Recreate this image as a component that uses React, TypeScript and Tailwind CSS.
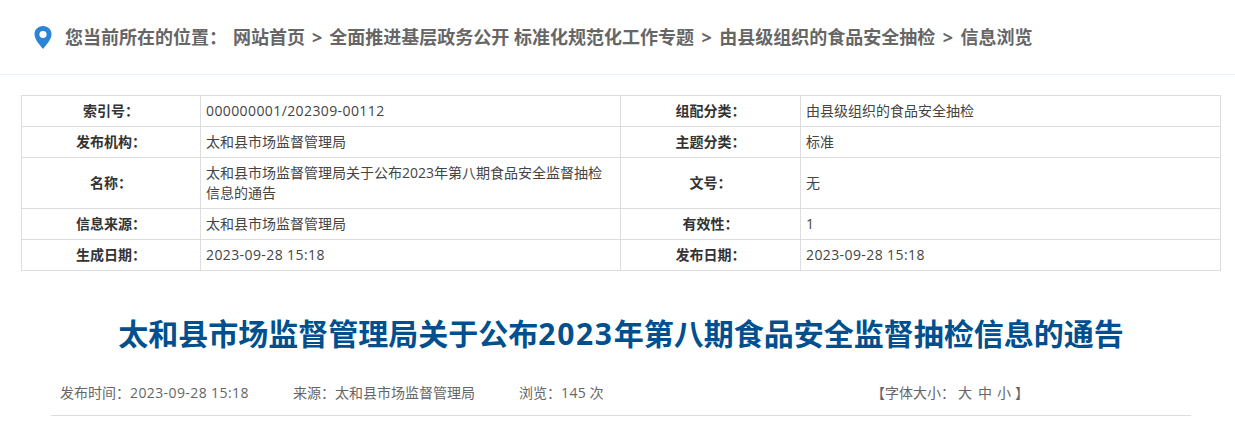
import type { ReactNode } from "react";

const font = "font-['Open_Sans','Noto_Sans_CJK_SC','Noto_Sans_CJK_JP',sans-serif]";
const C = "\uFF1A";

function Pin() {
  return (
    <svg width="18" height="23" viewBox="0 0 18 24" preserveAspectRatio="none" className="shrink-0">
      <path
        fillRule="evenodd"
        fill="#2a84d8"
        d="M9 0C4 0 .5 3.800.5 8.600.5 14.200 6 20 9 24c3-4 8.500-9.800 8.500-15.400C17.500 3.800 14 0 9 0Zm0 5.200a3.600 3.600 0 1 1 0 7.200 3.600 3.600 0 0 1 0-7.200Z"
      />
    </svg>
  );
}

function Num({ children }: { children: ReactNode }) {
  return <span className="tracking-[0.4px]">{children}</span>;
}

const date = <Num>2023-09-28 15:18</Num>;

const rows: { a: string; b: ReactNode; c: string; d: ReactNode; h: string; blue?: boolean }[] = [
  { a: "索引号" + C, b: <Num>000000001/202309-00112</Num>, c: "组配分类" + C, d: "由县级组织的食品安全抽检", h: "h-[31px]" },
  { a: "发布机构" + C, b: "太和县市场监督管理局", c: "主题分类" + C, d: "标准", h: "h-[31px]" },
  {
    a: "名称" + C,
    b: "太和县市场监督管理局关于公布2023年第八期食品安全监督抽检信息的通告",
    c: "文号" + C,
    d: "无",
    h: "h-[51px]",
  },
  { a: "信息来源" + C, b: "太和县市场监督管理局", c: "有效性" + C, d: "1", h: "h-[31px]", blue: true },
  { a: "生成日期" + C, b: date, c: "发布日期" + C, d: date, h: "h-[31px]" },
];

const labelCls = "border border-[#dddddd] text-center font-bold text-[14px] text-[#333333] pt-0 px-0 pb-[2px]";
const valueCls = "border border-[#dddddd] text-left text-[14px] leading-[20px] text-[#444444] px-[5px] py-0";

export default function App() {
  return (
    <div className={`${font} w-[1235px] h-[446px] overflow-hidden bg-white`}>
      <div className="h-[75px] border-b border-[#eaf2fa] flex items-center pl-[34px] gap-[13px] text-[18px] font-bold text-[#666666]">
        <Pin />
        <div className="whitespace-pre flex items-center">
          <span>{"您当前所在的位置" + C}</span>
          <span className="ml-[6px]">网站首页</span>
          <span className="mx-[7px]">&gt;</span>
          <span>全面推进基层政务公开 标准化规范化工作专题</span>
          <span className="mx-[7.5px]">&gt;</span>
          <span>由县级组织的食品安全抽检</span>
          <span className="mx-[7.500px]">&gt;</span>
          <span>信息浏览</span>
        </div>
      </div>

      <div className="pt-[20px] pl-[21px]">
        <table className="w-[1199px] table-fixed border-collapse">
          <colgroup>
            <col className="w-[179px]" />
            <col className="w-[420px]" />
            <col className="w-[180px]" />
            <col className="w-[420px]" />
          </colgroup>
          <tbody>
            {rows.map((r) => (
              <tr key={r.a} className={r.h}>
                <td className={labelCls}>{r.a}</td>
                <td className={valueCls}>{r.b}</td>
                <td className={labelCls}>{r.c}</td>
                <td className={`${valueCls} ${r.blue ? "text-[#1a237e]" : ""}`}>{r.d}</td>
              </tr>
            ))}
          </tbody>
        </table>
      </div>

      <h1 className="mt-[43px] text-center text-[30px] leading-[40px] font-bold text-[#00508f] pl-[7px]">
        太和县市场监督管理局关于公布<span className="tracking-[1.7px]">2023</span>年第八期食品安全监督抽检信息的通告
      </h1>

      <div className="mx-[51px] mt-[18px] w-[1140px] h-[44px] border-b border-[#dddddd] flex items-center pl-[9px] pb-[2px] text-[14px] text-[#666666] whitespace-pre">
        <span className="w-[233px]">{"发布时间" + C}{date}</span>
        <span className="w-[226px]">{"来源" + C + "太和县市场监督管理局"}</span>
        <span className="w-[352px]">{"浏览" + C}<Num>145</Num> 次</span>
        <span className="flex">
          <span>{"【字体大小" + C}</span>
          <span className="ml-[3px]">大</span>
          <span className="ml-[6px]">中</span>
          <span className="ml-[5px]">小</span>
          <span className="ml-[4px]">】</span>
        </span>
      </div>
    </div>
  );
}
